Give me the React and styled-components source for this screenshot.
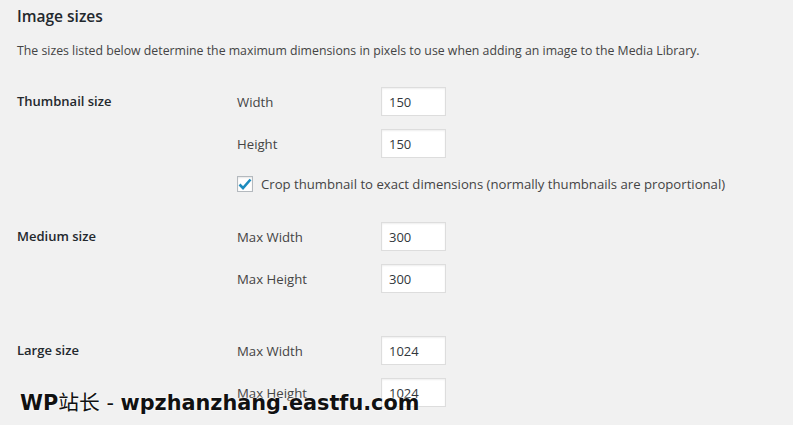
import React from 'react';
import styled, { createGlobalStyle } from 'styled-components';

const Global = createGlobalStyle`
	html, body {
		margin: 0;
		padding: 0;
		background: #f1f1f1;
	}
	body {
		font-family: 'Open Sans', 'Noto Sans', sans-serif;
		color: #444;
	}
`;

const groups = [
	{
		title: 'Thumbnail size',
		gapTop: 26,
		fields: [
			{ label: 'Width', value: '150' },
			{ label: 'Height', value: '150' },
		],
		crop: true,
	},
	{
		title: 'Medium size',
		gapTop: 29,
		fields: [
			{ label: 'Max Width', value: '300' },
			{ label: 'Max Height', value: '300' },
		],
	},
	{
		title: 'Large size',
		gapTop: 43,
		fields: [
			{ label: 'Max Width', value: '1024' },
			{ label: 'Max Height', value: '1024' },
		],
	},
];

export default function App() {
	return (
		<Page>
			<Global />
			<Heading>Image sizes</Heading>
			<Intro>
				The sizes listed below determine the maximum dimensions in pixels to use when adding an image to the Media Library.
			</Intro>
			{groups.map((g) => (
				<Group key={g.title} $gapTop={g.gapTop}>
					<GroupTitle>{g.title}</GroupTitle>
					<Fields>
						{g.fields.map((f) => (
							<FieldRow key={f.label}>
								<FieldLabel>{f.label}</FieldLabel>
								<NumberInput defaultValue={f.value} />
							</FieldRow>
						))}
						{g.crop && (
							<CheckRow>
								<CheckBox>
									<svg width="14" height="12" viewBox="0 0 14 12">
										<path d="M1.5 6.5 L5 10 L12.5 1.5" fill="none" stroke="#1e8cbe" strokeWidth="2.6" />
									</svg>
								</CheckBox>
								<CheckText>Crop thumbnail to exact dimensions (normally thumbnails are proportional)</CheckText>
							</CheckRow>
						)}
					</Fields>
				</Group>
			))}
			<Watermark>
				WP<Cjk>站长</Cjk>
				<Dash> - </Dash>wpzhanzhang.eastfu.com
			</Watermark>
		</Page>
	);
}

const Page = styled.div`
	position: relative;
	width: 793px;
	height: 425px;
	overflow: hidden;
	padding: 6px 0 0 17px;
	box-sizing: border-box;
`;

const Heading = styled.h2`
	margin: 0;
	font-size: 15.5px;
	font-weight: 600;
	color: #23282d;
	line-height: 20px;
`;

const Intro = styled.p`
	margin: 15px 0 0;
	font-size: 12.3px;
	line-height: 20px;
	color: #444;
	white-space: nowrap;
`;

const Group = styled.div`
	display: flex;
	margin-top: ${(p) => p.$gapTop}px;
`;

const GroupTitle = styled.div`
	width: 220px;
	flex-shrink: 0;
	font-size: 13px;
	font-weight: 600;
	color: #23282d;
	line-height: 20px;
	padding-top: 4px;
`;

const Fields = styled.div`
	display: flex;
	flex-direction: column;
	gap: 13px;
`;

const FieldRow = styled.div`
	display: flex;
	align-items: center;
	height: 29px;
`;

const FieldLabel = styled.span`
	width: 144px;
	font-size: 13.2px;
	color: #444;
`;

const NumberInput = styled.input`
	width: 65px;
	height: 29px;
	box-sizing: border-box;
	border: 1px solid #ddd;
	box-shadow: inset 0 1px 2px rgba(0, 0, 0, 0.07);
	background: #fff;
	padding: 3px 7px;
	font-family: 'Open Sans', 'Noto Sans', sans-serif;
	font-size: 13px;
	color: #32373c;
	outline: none;
`;

const CheckRow = styled.label`
	display: flex;
	align-items: center;
	gap: 8px;
	margin-top: 4px;
`;

const CheckBox = styled.span`
	width: 16px;
	height: 16px;
	box-sizing: border-box;
	border: 1px solid #b4b9be;
	background: #fff;
	box-shadow: inset 0 1px 2px rgba(0, 0, 0, 0.1);
	display: flex;
	align-items: center;
	justify-content: center;
`;

const CheckText = styled.span`
	font-size: 13.15px;
	color: #444;
`;

const Watermark = styled.div`
	position: absolute;
	left: 20px;
	top: 386px;
	font-family: 'DejaVu Sans', sans-serif;
	font-weight: 700;
	font-size: 20.8px;
	color: #111;
	white-space: nowrap;
	text-shadow: 0 0 2px #fff, 0 0 2px #fff;
`;

const Cjk = styled.span`
	font-family: 'Noto Sans CJK SC', sans-serif;
	font-weight: 400;
`;

const Dash = styled.span`
	font-weight: 400;
	white-space: pre;
`;
